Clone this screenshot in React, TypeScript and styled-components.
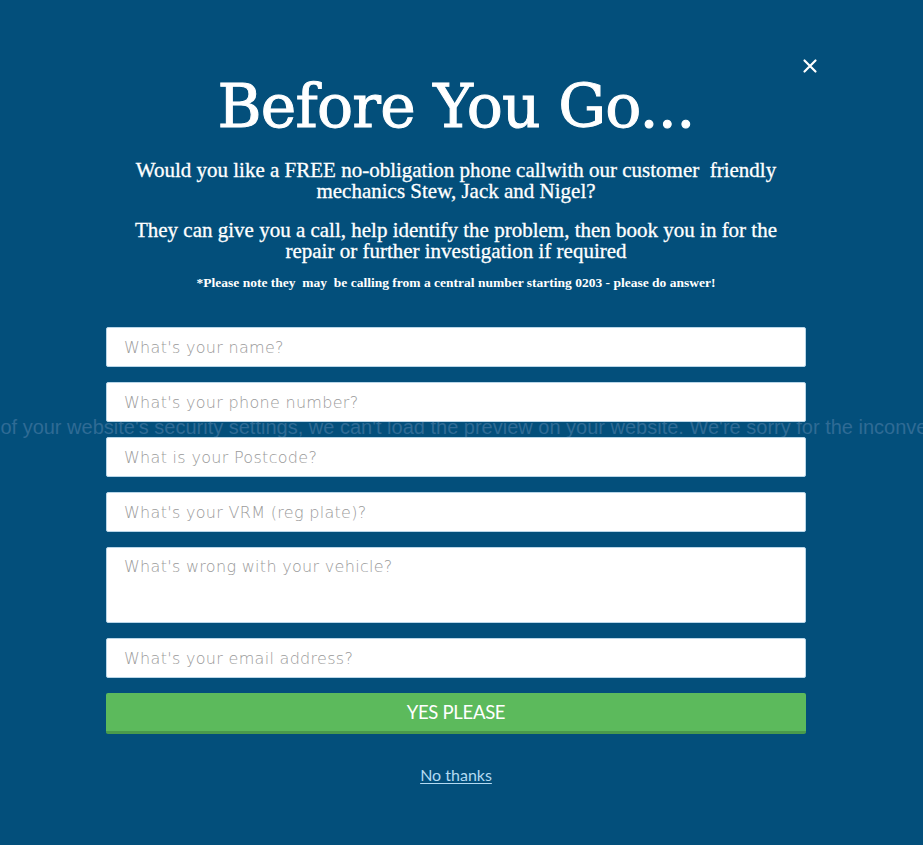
import React from "react";
import styled, { createGlobalStyle } from "styled-components";

const Global = createGlobalStyle`
  html, body { margin: 0; padding: 0; background: #034f7b; }
  body { width: 923px; height: 845px; overflow: hidden; }
  * { box-sizing: border-box; }
`;

const Page = styled.div`
  position: relative;
  width: 923px;
  height: 845px;
  background: #034f7b;
  overflow: hidden;
`;

const BackText = styled.div`
  position: absolute;
  top: 416px;
  left: -83px;
  white-space: nowrap;
  font-family: "Liberation Sans", Arial, sans-serif;
  font-size: 20px;
  color: #2f6b95;
  z-index: 0;
`;

const Close = styled.button`
  position: absolute;
  top: 58px;
  left: 802px;
  width: 16px;
  height: 16px;
  padding: 0;
  border: none;
  background: transparent;
  cursor: pointer;
  z-index: 2;
`;

const Modal = styled.div`
  position: relative;
  z-index: 1;
  width: 700px;
  margin-left: 106px;
  padding-top: 66px;
  display: flex;
  flex-direction: column;
  align-items: center;
`;

const Title = styled.h1`
  margin: 0;
  font-family: "DejaVu Serif", "Liberation Serif", serif;
  font-weight: 400;
  font-size: 60px;
  line-height: 80px;
  color: #ffffff;
  letter-spacing: -0.8px;
  -webkit-text-stroke: 1px #ffffff;
`;

const Lead = styled.p<{ $top: number }>`
  margin: 0;
  width: 670px;
  text-align: center;
  font-family: "Liberation Serif", "Times New Roman", serif;
  font-size: 21px;
  line-height: 21px;
  color: #ffffff;
  -webkit-text-stroke: 0.3px #ffffff;
  margin-top: ${(p) => p.$top}px;
`;

const Note = styled.p`
  margin: 13px 0 0;
  font-family: "Liberation Serif", "Times New Roman", serif;
  font-weight: 700;
  font-size: 13.5px;
  line-height: 15px;
  color: #ffffff;
`;

const Form = styled.form`
  width: 700px;
  margin-top: 37px;
  display: flex;
  flex-direction: column;
  gap: 15px;
`;

const Field = styled.input`
  width: 100%;
  height: 40px;
  border: 1px solid #b9d6e8;
  border-radius: 2px;
  background: #ffffff;
  padding: 0 17px;
  font-family: "DejaVu Sans", "Noto Sans", sans-serif;
  font-weight: 300;
  font-size: 16px;
  letter-spacing: 0.3px;
  color: #333;
  outline: none;
  &::placeholder { color: #9a9a9a; }
`;

const Area = styled.textarea`
  width: 100%;
  height: 76px;
  border: 1px solid #b9d6e8;
  border-radius: 2px;
  background: #ffffff;
  padding: 9px 17px;
  font-family: "DejaVu Sans", "Noto Sans", sans-serif;
  font-weight: 300;
  font-size: 16px;
  letter-spacing: 0.3px;
  line-height: 20px;
  resize: none;
  outline: none;
  &::placeholder { color: #9a9a9a; }
`;

const Submit = styled.button`
  width: 100%;
  height: 41px;
  border: none;
  border-bottom: 3px solid #4a9b4c;
  border-radius: 2px;
  background: #5cba5c;
  color: #ffffff;
  font-family: "Lato", "Noto Sans", sans-serif;
  font-size: 18.5px;
  letter-spacing: -0.3px;
  padding-top: 0;
  cursor: pointer;
`;

const NoThanks = styled.a`
  margin-top: 31px;
  font-family: "Lato", "Noto Sans", sans-serif;
  font-size: 16px;
  color: #b3daf2;
  text-decoration: underline;
  text-underline-offset: 2px;
  cursor: pointer;
`;

export default function App() {
  return (
    <Page>
      <Global />
      <BackText>
        Because of your website's security settings, we can't load the preview on your website. We're sorry for the inconvenience.
      </BackText>
      <Close aria-label="Close">
        <svg width="16" height="16" viewBox="0 0 16 16">
          <path d="M2.5 2.5 L13.5 13.5 M13.5 2.5 L2.5 13.5" stroke="#ffffff" strokeWidth="2.2" strokeLinecap="round" />
        </svg>
      </Close>
      <Modal>
        <Title>Before You Go...</Title>
        <Lead $top={14}>
          Would you like a FREE no-obligation phone callwith our customer&nbsp; friendly mechanics Stew, Jack and Nigel?
        </Lead>
        <Lead $top={18}>
          They can give you a call, help identify the problem, then book you in for the repair or further investigation if required
        </Lead>
        <Note>*Please note they&nbsp; may&nbsp; be calling from a central number starting 0203 - please do answer!</Note>
        <Form onSubmit={(e) => e.preventDefault()}>
          <Field placeholder="What's your name?" />
          <Field placeholder="What's your phone number?" />
          <Field placeholder="What is your Postcode?" />
          <Field placeholder="What's your VRM (reg plate)?" />
          <Area placeholder="What's wrong with your vehicle?" />
          <Field placeholder="What's your email address?" />
          <Submit type="submit">YES PLEASE</Submit>
        </Form>
        <NoThanks>No thanks</NoThanks>
      </Modal>
    </Page>
  );
}
